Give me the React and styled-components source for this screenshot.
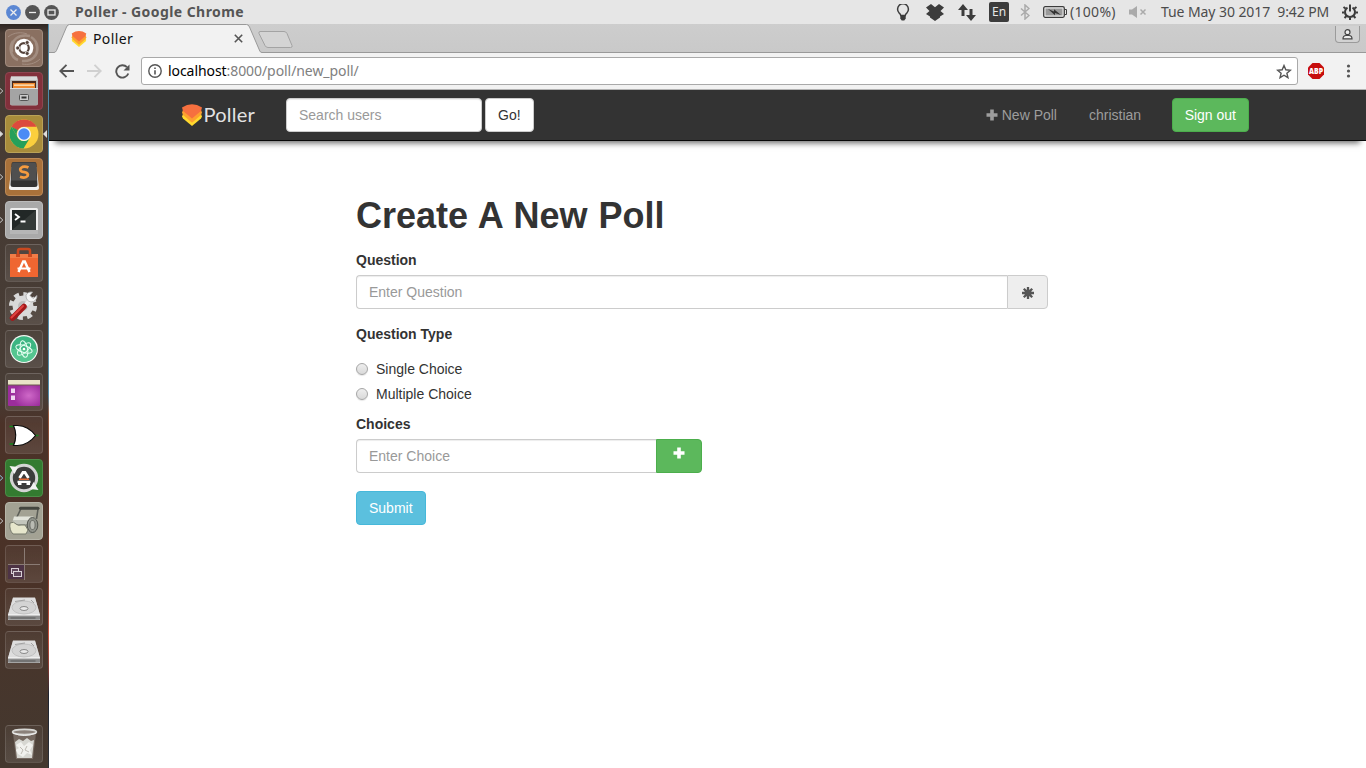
import React from "react";
import styled, { createGlobalStyle, css } from "styled-components";

const GlobalStyle = createGlobalStyle`
  * { box-sizing: border-box; }
  html, body { margin: 0; height: 768px; overflow: hidden; background: #fff; }
  body { font: 14px/20px "Liberation Sans", Arial, sans-serif; color: #333; }
  svg { display: block; flex: none; }
`;

const ubuntu = css`font-family: "Noto Sans", "Open Sans", sans-serif; white-space: nowrap;`;

/* ---------- desktop shell ---------- */
const Desktop = styled.div`
  width: 1366px; height: 768px; display: flex; flex-direction: column; overflow: hidden;
`;
const Panel = styled.header`
  ${ubuntu}
  height: 24px; flex: none; display: flex; align-items: center;
  background: #e6e6e6; color: #4c4c4c; font-size: 14px; line-height: 24px;
`;
const WindowButtons = styled.div`display: flex; gap: 4px; margin-left: 6px;`;
const WindowTitle = styled.div`
  width: 200px; margin-left: 16px; font-weight: 700; font-size: 14px; letter-spacing: ${(p) => p.$ls || 0}px; color: #555;
`;
const Indicators = styled.div`display: flex; align-items: center; margin-left: auto; height: 24px;`;
const Indicator = styled.div`
  width: ${(p) => p.$w}px; margin-right: ${(p) => p.$gap || 0}px; height: 24px; display: flex; align-items: center; justify-content: center;
`;
const IndicatorText = styled.div`
  width: ${(p) => p.$w}px; margin-right: ${(p) => p.$gap || 0}px; font-size: 14px; letter-spacing: ${(p) => p.$ls || 0}px; white-space: pre;
`;
const Keyboard = styled.div`
  width: 20px; height: 20px; margin-right: 11px; border-radius: 2px; background: #3c3c3c; color: #e6e6e6;
  font-size: 12px; line-height: 20px; text-align: center;
`;
const Workspace = styled.div`display: flex; flex: 1; min-height: 0;`;

/* ---------- launcher ---------- */
const Launcher = styled.nav`
  width: 49px; flex: none; display: flex; flex-direction: column; gap: 5px; padding: 5px 0 5px 0;
  border-right: 1px solid; border-image: linear-gradient(#4f8cab 0, #4f8cab 370px, #9a5a3e 390px, #5a3028 470px, #8a4030 560px, #c9503c 610px, #8f3d33 640px, #1f2430 670px, #2c3038 744px) 1;
  background: linear-gradient(#2e2622 0, #473b34 9px, #473c35 370px, #4b3228 400px, #4a3227 560px, #48352b 610px, #44382f 744px);
`;
const LauncherItem = styled.div`
  height: 38px; display: flex; align-items: center; flex: none; margin-top: ${(p) => (p.$last ? "auto" : 0)};
`;
const Pip = styled.div`width: 5px; height: 10px; display: flex; align-items: center;`;
const Tile = styled.div`
  width: 38px; height: 38px; border-radius: 4px; overflow: hidden; border: 1px solid ${(p) => p.$edge || "rgba(255,255,255,.12)"};
  background: ${(p) => p.$bg || "linear-gradient(rgba(255,255,255,.04), rgba(255,255,255,.1))"};
  svg { margin: -1px; }
`;

/* ---------- browser ---------- */
const Browser = styled.div`flex: 1; min-width: 0; display: flex; flex-direction: column; background: #fff;`;
const TabStrip = styled.div`
  height: 29px; flex: none; display: flex; background: linear-gradient(#cdcdcd, #c9c9c9); box-shadow: inset 0 -1px #999;
`;
const TabShape = styled.div`position: relative; width: 206px; height: 29px; margin-left: 5px;`;
const TabOutline = styled.svg`position: absolute; left: 0; top: 0;`;
const TabContent = styled.div`
  ${ubuntu}
  position: relative; display: flex; align-items: center; height: 29px; padding: 0 17px 0 17px; color: #111; font-size: 14px;
`;
const TabTitle = styled.span`margin-left: 6px; flex: 1; letter-spacing: ${(p) => p.$ls || 0}px;`;
const NewTab = styled.div`margin: 7px 0 0 -3px;`;
const UserButton = styled.div`
  margin: 2px 6px 0 auto; width: 25px; height: 17px; border: 1px solid #9b9b9b; border-top: 0; border-radius: 0 0 4px 4px;
  display: flex; justify-content: center; padding-top: 3px; background: #d2d2d2;
`;
const Toolbar = styled.div`
  height: 37px; flex: none; display: flex; align-items: center; background: #f2f2f2; border-bottom: 1px solid #b3b3b3;
  padding: 0 0 0 9px;
`;
const Omnibox = styled.div`
  ${ubuntu}
  flex: none; width: 1157px; height: 28px; margin: 0 9px 0 11px; padding: 0 5px 0 6px; display: flex; align-items: center;
  background: #fff; border: 1px solid #a9a9a9; border-radius: 3px; font-size: 14px; color: #808080;
`;
const Url = styled.div`margin-left: 6px; flex: 1; letter-spacing: ${(p) => p.$ls || 0}px; b { font-weight: 400; color: #000; }`;
const ToolIcon = styled.div`flex: none; width: ${(p) => p.$w}px; display: flex; justify-content: center;`;

/* ---------- page ---------- */
const Page = styled.main`flex: 1;`;
const Navbar = styled.div`
  height: 51px; background: #333; border-bottom: 1px solid #080808; box-shadow: 0 8px 6px -6px rgba(0,0,0,.6);
  display: flex; align-items: center; padding: 0 117px 1px 133px;
`;
const Brand = styled.div`display: flex; align-items: center; width: 104px;`;
const BrandName = styled.span`
  margin: -2px 0 0 1.5px; font: 400 20px/24px Lato, sans-serif; letter-spacing: ${(p) => p.$ls || 0}px; color: #e2e2e2;
`;
const Input = styled.input`
  height: 34px; width: ${(p) => p.$w}px; padding: 6px 12px; font: 14px/20px "Liberation Sans", Arial, sans-serif; color: #555;
  background: #fff; border: 1px solid #ccc; border-radius: ${(p) => (p.$joined ? "4px 0 0 4px" : "4px")};
  box-shadow: inset 0 1px 1px rgba(0,0,0,.075); outline: 0; ${(p) => p.$joined && "border-right: 0;"}
  &::placeholder { color: #999; opacity: 1; }
`;
const tones = {
  plain: ["#fff", "#ccc", "#333"],
  success: ["#5cb85c", "#4cae4c", "#fff"],
  info: ["#5bc0de", "#46b8da", "#fff"],
};
const Button = styled.button`
  height: 34px; padding: 6px 12px; font: 14px/20px "Liberation Sans", Arial, sans-serif; white-space: nowrap;
  background: ${(p) => tones[p.$tone][0]}; border: 1px solid ${(p) => tones[p.$tone][1]}; color: ${(p) => tones[p.$tone][2]};
  border-radius: ${(p) => (p.$joined ? "0 4px 4px 0" : "4px")};
`;
const SearchForm = styled.div`display: flex; gap: 3px;`;
const NavLinks = styled.div`display: flex; align-items: center; margin-left: auto; color: #9d9d9d;`;
const NavLink = styled.a`display: flex; align-items: center; gap: 3.5px; margin-right: ${(p) => p.$gap}px;`;
const Form = styled.form`width: 692px; margin: 55px 0 0 307px;`;
const Heading = styled.h1`margin: 0 0 14px; font-size: 36px; line-height: 40px; font-weight: 700; height: 40px; word-spacing: 1px;`;
const Label = styled.label`display: block; height: 20px; margin-bottom: ${(p) => p.$gap ?? 5}px; font-weight: 700;`;
const InputGroup = styled.div`display: flex; height: 34px; margin-bottom: ${(p) => p.$gap}px;`;
const Addon = styled.div`
  width: 41px; height: 34px; border: 1px solid #ccc; border-radius: 0 4px 4px 0; background: #eee;
  display: flex; align-items: center; justify-content: center; padding-top: 2px;
`;
const AddButton = styled(Button)`width: 46px; display: flex; justify-content: center; padding: 7px 0 0;`;
const RadioRow = styled.label`display: flex; align-items: center; gap: 8px; height: 20px; margin-bottom: ${(p) => p.$gap}px;`;
const Radio = styled.input`
  appearance: none; width: 12px; height: 12px; margin: 0; border: 1px solid #a6a6a6; border-radius: 50%;
  background: linear-gradient(#eee, #d9d9d9); box-shadow: 0 1px 1px rgba(0,0,0,.1);
`;

/* ---------- drawings ---------- */
const PollerMark = ({ w, h }) => (
  <svg width={w} height={h} viewBox="0 0 20 22">
    <path d="M0 12.500L1 10h18l1 2.500-1 2L10 22 1 14.500z" fill="#ffd92e" />
    <path d="M0 8.500L1 6h18l1 2.500-1 2.500-9 7.800L1 11z" fill="#fda12f" />
    <path d="M0 3.500Q10-3.200 20 3.500L19 7l-9 7.500L1 7z" fill="#f6703f" />
  </svg>
);
const Plus = ({ size, color }) => (
  <svg width={size} height={size} viewBox="0 0 12 12"><path d="M4.200 .5h3.600v3.700h3.700v3.600H7.800v3.700H4.200V7.800H.5V4.200h3.700z" fill={color} /></svg>
);
const WinButton = ({ fill, children }) => (
  <svg width="15" height="15" viewBox="0 0 15 15">
    <circle cx="7.500" cy="7.500" r="7.400" fill={fill} />
    <g stroke="#eee" strokeWidth="1.300" fill="none">{children}</g>
  </svg>
);
const Art = ({ children }) => <svg width="38" height="38" viewBox="0 0 38 38">{children}</svg>;

const UbuntuArt = () => (
  <Art>
    <g fill="none" stroke="#c9bbb2" strokeWidth="2.500" opacity=".4">
      <path d="M7 23C5 10 14 5 25 7M31 14c4 11-3 19-14 18M13 31C5 28 4 18 8 12M26 8c8 5 8 15 3 20" />
      <path d="M3 8c6-5 14-5 19-3M35 30c-5 5-12 6-18 5" strokeWidth="1" />
    </g>
    <circle cx="19" cy="19" r="9.300" fill="#fff" />
    <circle cx="19" cy="19" r="4.800" fill="none" stroke="#54423a" strokeWidth="2.200" />
    <g fill="#54423a" stroke="#fff" strokeWidth=".7"><circle cx="12.700" cy="19" r="2" /><circle cx="22.200" cy="13.500" r="2" /><circle cx="22.200" cy="24.500" r="2" /></g>
  </Art>
);
const FilesArt = () => (
  <Art>
    <path d="M6 4.500h26l1 3v24q0 2-2 2H7q-2 0-2-2v-24z" fill="#b8b8b8" /><path d="M6 4.500h26v3.500H6z" fill="#d8d8d8" />
    <path d="M7 9h24v7H7z" fill="#4a2a1c" /><path d="M8 11h22v5H8z" fill="#f08a30" /><path d="M9 12.500h20v1.200H9z" fill="#fff0d0" />
    <path d="M5 16h28v15q0 2-2 2H7q-2 0-2-2z" fill="#a4a4a4" /><path d="M5 16h28v1H5z" fill="#ddd" />
    <rect x="14.500" y="22.500" width="9" height="6" rx="1" fill="#ccc" stroke="#555" /><path d="M16.500 25.500h5" stroke="#333" strokeWidth="2" />
  </Art>
);
const ChromeArt = () => (
  <Art>
    <circle cx="19" cy="19" r="14.500" fill="#fbcf3d" />
    <path d="M6.400 11.800A14.500 14.500 0 0 1 31.600 11.800H19a7.200 7.200 0 0 0-6.200 3.600z" fill="#dc4a3d" />
    <path d="M6.400 11.800A14.500 14.500 0 0 0 18.500 33.500l6.700-11A7.200 7.200 0 0 1 12.800 22.600z" fill="#26a05a" />
    <path d="M6.400 11.800l6.400 10.800A7.200 7.200 0 0 1 12.800 15z" fill="#26a05a" />
    <circle cx="19" cy="19" r="7" fill="#f5f5f5" /><circle cx="19" cy="19" r="5.700" fill="#4b8bf5" />
  </Art>
);
const SublimeArt = () => (
  <Art>
    <path d="M6.500 9h25l2.500 21q0 2-2 2H6q-2 0-2-2z" fill="#f3f3f3" />
    <path d="M8.500 4h21q2 0 2 2l1 20.500q0 2.500-2.500 2.500H8q-2.500 0-2.500-2.500L6.500 6q0-2 2-2z" fill="#333" />
    <path d="M8.500 4.500h21q1.500 0 1.500 2l.8 16H6.200L7 6.500q0-2 1.500-2z" fill="#4f4f4f" />
    <path d="M23.500 9.500q-3-1.500-6-.6-3.500 1.600-1.600 4 1 1 3.600 1.300 4.500.8 3 3.800-2 2.700-7.500.8" fill="none" stroke="#f49b3f" strokeWidth="2.800" />
  </Art>
);
const TerminalArt = () => (
  <Art>
    <rect x="5" y="7" width="28" height="26" rx="1.500" fill="#eee" /><rect x="5" y="29" width="28" height="4" fill="#b6b6b6" />
    <rect x="7" y="9" width="24" height="20" fill="#222827" /><path d="M7 29L31 9v20z" fill="#343a38" />
    <path d="M10 13l4 3-4 3M15.500 20.500h5" fill="none" stroke="#fff" strokeWidth="1.800" />
  </Art>
);
const SoftwareArt = () => (
  <Art>
    <path d="M13 10V7q0-2 2-2h8q2 0 2 2v3" fill="none" stroke="#c94920" strokeWidth="2.500" />
    <path d="M5 10h28v23H5z" fill="#ef6631" /><path d="M5 10h28v4H5z" fill="#f27c47" /><path d="M11 10h4v3h-4zM23 10h4v3h-4z" fill="#c94920" />
    <path d="M13.500 28L18.200 17.500h1.600L24.500 28" fill="none" stroke="#fff" strokeWidth="2.500" /><path d="M12.500 24.500h13" stroke="#fff" strokeWidth="2" />
  </Art>
);
const SettingsArt = () => (
  <Art>
    <circle cx="18" cy="19" r="11.800" fill="none" stroke="#d7d7d7" strokeWidth="4.500" strokeDasharray="5 4.270" />
    <circle cx="18" cy="19" r="10.500" fill="#d9d9d9" /><circle cx="18" cy="19" r="5" fill="#bdbdbd" />
    <path d="M17 22L26 12.500" stroke="#ececec" strokeWidth="4" /><path d="M32 8.500l-4 3-3-3 2.500-3.500q-5-.5-6.500 3.500 0 5.500 5 6.500 6-.5 6-6.500z" fill="#f4f4f4" stroke="#aaa" strokeWidth=".8" />
    <path d="M7.500 31L19 19.500" stroke="#a4181a" strokeWidth="5.500" strokeLinecap="round" /><path d="M6.500 30.500L18 19" stroke="#df4240" strokeWidth="2" strokeLinecap="round" />
  </Art>
);
const AtomArt = () => (
  <Art>
    <circle cx="19" cy="19" r="14" fill="#f4f8f4" /><circle cx="19" cy="19" r="12.700" fill="#3cb582" /><path d="M6.300 19a12.700 12.700 0 0 0 25.400 0z" fill="#55c690" />
    <g fill="none" stroke="#e6fff2" strokeWidth="1"><ellipse cx="19" cy="19" rx="8.500" ry="3.500" transform="rotate(18 19 19)" /><ellipse cx="19" cy="19" rx="8.500" ry="3.500" transform="rotate(78 19 19)" /><ellipse cx="19" cy="19" rx="8.500" ry="3.500" transform="rotate(138 19 19)" /></g>
    <circle cx="19" cy="19" r="1.300" fill="#fff" />
  </Art>
);
const WindowArt = () => (
  <Art>
    <defs><radialGradient id="purple" cx=".65" cy=".6"><stop offset="0" stopColor="#cf69c8" /><stop offset="1" stopColor="#9b2d9c" /></radialGradient></defs>
    <rect x="3" y="7" width="32" height="26" rx="1" fill="url(#purple)" /><rect x="3" y="7" width="32" height="5" fill="#e9e4c7" /><path d="M3 12h32" stroke="#6d5b4c" />
    <path d="M6 15.500h4v4.500H6zM6 22.500h4V27H6z" fill="#f0d5f1" />
  </Art>
);
const GateArt = () => (
  <Art>
    <path d="M4.500 10.500h6M4.500 28h6M30 19.500h3.500" stroke="#11841b" strokeWidth="1.500" />
    <path d="M8.500 9.500h4q11 .5 18 10-7 9.500-18 10h-4q4.500-10 0-20z" fill="#fff" stroke="#0b0b0b" strokeWidth="1.200" />
  </Art>
);
const UpdaterArt = () => (
  <Art>
    <circle cx="19" cy="19" r="12.700" fill="#3c3c3c" stroke="#d4d4d4" strokeWidth="3" />
    <path d="M4.500 7l8.500 1-3.500 7zM33.500 31L25 30l3.500-7z" fill="#f2f2f2" />
    <path d="M14.500 19l3.500-5.500h2l3.500 5.500" fill="none" stroke="#fff" strokeWidth="2.800" />
    <path d="M14 20.300h10" stroke="#e36a36" strokeWidth="1.600" /><path d="M12.500 22.800h13" stroke="#fff" strokeWidth="2.200" /><path d="M13 25h3.500M21.500 25H25" stroke="#fff" strokeWidth="2.200" />
  </Art>
);
const RollerArt = () => (
  <Art>
    <path d="M11 17l5-10.500M31.500 17L33 7" fill="none" stroke="#5c5e58" strokeWidth="1.600" /><path d="M15.500 6.200h17.500" stroke="#44463f" strokeWidth="3" strokeLinecap="round" />
    <path d="M9 15h18q7 2 6 9-1 7-6 8H10z" fill="#9a9d94" /><path d="M9 14.500h19q2.500 1 3.500 3.500H8z" fill="#e2e4db" /><path d="M8 18h22v4H7z" fill="#c3c6bc" />
    <ellipse cx="27.500" cy="23" rx="5.300" ry="7.500" fill="#8f928a" stroke="#52544d" /><ellipse cx="27.500" cy="23" rx="2.600" ry="4.500" fill="#b9bbb3" stroke="#5e6059" strokeWidth=".8" />
    <path d="M5 21q4-2 6 1 2 2 5 1h4l3 5-2 4H8q-4-4-3-11z" fill="#e6e6cc" stroke="#777a6d" />
  </Art>
);
const WorkspaceArt = () => (
  <Art>
    <rect x="3" y="20" width="16" height="14" fill="#4d3345" /><path d="M19.500 3v32M3 19.500h32" stroke="#8a7b74" strokeWidth="1" />
    <g fill="#5e465a" stroke="#d8d0d6"><rect x="6.500" y="23.500" width="7" height="5" /><rect x="8.500" y="26.500" width="8" height="5" /></g>
  </Art>
);
const DiskArt = () => (
  <Art>
    <path d="M8 10h22l5 17v5H3v-5z" fill="#bdbdbd" /><path d="M8 9.500h22L35 27H3z" fill="#dedede" />
    <path d="M3 27h32v3.500q0 1-1 1H4q-1 0-1-1z" fill="#8c8c8c" /><path d="M3 27h32" stroke="#fff" />
    <path d="M5.500 30h25" stroke="#5a5a5a" />
    <ellipse cx="19" cy="19.500" rx="12" ry="6.500" fill="#d4d4d4" stroke="#c0c0c0" /><ellipse cx="19" cy="20.500" rx="4" ry="2" fill="#e9e9e9" stroke="#8a8a8a" /><path d="M10 13.500l10-1.500M26 12l3 3" stroke="#a2a2a2" />
  </Art>
);
const TrashArt = () => (
  <Art>
    <path d="M8 8h23l-3 26H11z" fill="#81766e" opacity=".75" />
    <path d="M10 17l4-3 4 2 4-3 4 3 3-1-2 18H12z" fill="#d7d7d2" /><path d="M11 20l5-3 3 4 5-4 4 3-3 5 2 5-5-2-4 4-5-3-2-4 3-2z" fill="#f1f1ee" />
    <path d="M15 22l3 3-2 4M22 21l-2 4 4 2" fill="none" stroke="#bdbab3" />
    <ellipse cx="19.500" cy="7" rx="12" ry="2.600" fill="#8b817a" stroke="#d8d8d5" strokeWidth="1.600" /><path d="M8 8q11 5 23 0" fill="none" stroke="#eee" />
  </Art>
);

const apps = [
  [UbuntuArt, "#8a7162", "#a18b7e"],
  [FilesArt, "#82303b", "#8e4550", "open"],
  [ChromeArt, "#a88c3b", "#baa257", "active"],
  [SublimeArt, "#a9713a", "#bb8856", "open"],
  [TerminalArt, "#a9a9a9", "#bbb", "open"],
  [SoftwareArt], [SettingsArt], [AtomArt], [WindowArt], [GateArt],
  [UpdaterArt, "#337b30", "#4b8d48", "notify"],
  [RollerArt, "#a3a294", "#b6b5a9", "open"],
  [WorkspaceArt], [DiskArt], [DiskArt], [TrashArt],
];

const Marker = ({ state, flip }) => (
  <svg width="5" height="8" viewBox="0 0 5 8">
    {flip ? <path d="M4 0v8L0 4z" fill="#ddd" /> : <path d="M-1 .5L2.800 4-1 7.500" fill={state === "active" ? "#ddd" : "none"} stroke={state === "notify" ? "#8fc7df" : "#ccc"} />}
  </svg>
);

export default function App() {
  return (
    <Desktop>
      <GlobalStyle />
      <Panel>
        <WindowButtons>
          <WinButton fill="#5b87d3"><path d="M4.500 4.500l6 6M10.500 4.500l-6 6" /></WinButton>
          <WinButton fill="#555"><path d="M4 7.500h7" /></WinButton>
          <WinButton fill="#555"><rect x="4" y="5" width="7" height="5" /></WinButton>
        </WindowButtons>
        <WindowTitle $ls={0.43}>Poller - Google Chrome</WindowTitle>
        <Indicators>
          <Indicator $w={14} $gap={16}>
            <svg width="14" height="17" viewBox="0 0 14 17"><path d="M4.800 11.500Q4.500 10 3 8.800a5.400 5.400 0 1 1 8 0q-1.500 1.200-1.800 2.700z" fill="none" stroke="#3c3c3c" strokeWidth="1.500" /><path d="M4.300 11.500h5.400v3L8.300 16.500H5.700l-1.400-2z" fill="#3c3c3c" /></svg>
          </Indicator>
          <Indicator $w={18} $gap={14}>
            <svg width="18" height="17" viewBox="0 0 18 17"><path d="M5 0l4 3.200L13 0l5 3.500L14.500 7 18 10l-4 2.500v1L9 17l-5-3.500v-1L0 10l3.500-3L0 3.500z" fill="#3c3c3c" /></svg>
          </Indicator>
          <Indicator $w={18} $gap={13}>
            <svg width="18" height="17" viewBox="0 0 18 17"><path d="M5 0l5 6H6.500v6h-3V6H0zM13 17l-5-6h3.500V5h3v6H18z" fill="#3c3c3c" /></svg>
          </Indicator>
          <Keyboard>En</Keyboard>
          <Indicator $w={10} $gap={13}>
            <svg width="10" height="16" viewBox="0 0 10 16"><path d="M1 4.500l8 7-4 3.500V1l4 3.500-8 7" fill="none" stroke="#aaa" strokeWidth="1.500" /></svg>
          </Indicator>
          <Indicator $w={24} $gap={3}>
            <svg width="24" height="12" viewBox="0 0 24 12"><rect x=".7" y=".7" width="20.600" height="10.600" rx="1.500" fill="#eee" stroke="#3c3c3c" strokeWidth="1.300" /><rect x="2.500" y="2.500" width="17" height="7" fill="#999" /><path d="M22 3.500h1.500v5H22" fill="none" stroke="#3c3c3c" /><path d="M5 3l6 2.500V3.200L18 9l-6-2v2.200z" fill="#333" /></svg>
          </Indicator>
          <IndicatorText $w={59} $ls={0.3}>(100%)</IndicatorText>
          <Indicator $w={18} $gap={14}>
            <svg width="18" height="12" viewBox="0 0 18 12"><path d="M0 3.500h3L8 0v12L3 8.500H0z" fill="#aaa" /><path d="M11.500 3.500l5 5M16.500 3.500l-5 5" stroke="#aaa" strokeWidth="1.500" /></svg>
          </Indicator>
          <IndicatorText $w={181} $ls={-0.08}>{"Tue May 30 2017  9:42 PM"}</IndicatorText>
          <Indicator $w={16} $gap={8}>
            <svg width="16" height="16" viewBox="0 0 16 16"><path d="M5.500 3.700a5 5 0 1 0 5 0" fill="none" stroke="#3c3c3c" strokeWidth="2" /><path d="M8 .5v7M1.500 3l2 1.500M14.500 3l-2 1.500M0 8.500h2.500M13.500 8.500H16M2.500 14l2-2M13.500 14l-2-2M8 13.500V16" stroke="#3c3c3c" strokeWidth="2" /></svg>
          </Indicator>
        </Indicators>
      </Panel>
      <Workspace>
        <Launcher>
          {apps.map(([Icon, bg, edge, state], i) => (
            <LauncherItem key={i} $last={i === apps.length - 1}>
              <Pip>{state && <Marker state={state} />}</Pip>
              <Tile $bg={bg} $edge={edge}><Icon /></Tile>
              <Pip>{state === "active" && <Marker flip />}</Pip>
            </LauncherItem>
          ))}
        </Launcher>
        <Browser>
          <TabStrip>
            <TabShape>
              <TabOutline width="208" height="29" viewBox="0 0 208 29">
                <path d="M0 28.500q1.500 0 2.500-2L12.500 3q1-2.500 3-2.500h177q2 0 3 2.500l10.300 24q.7 1.500 2.200 1.500V29H0z" fill="#f2f2f2" />
                <path d="M0 28.500q1.500 0 2.500-2L12.500 3q1-2.500 3-2.500h177q2 0 3 2.500l10.300 24q.7 1.500 2.200 1.500" fill="none" stroke="#999" />
              </TabOutline>
              <TabContent>
                <PollerMark w={16} h={16} />
                <TabTitle $ls={0.4}>Poller</TabTitle>
                <svg width="9" height="9" viewBox="0 0 9 9"><path d="M.8 .8l7.400 7.400M8.200 .8L.8 8.200" stroke="#555" strokeWidth="1.600" /></svg>
              </TabContent>
            </TabShape>
            <NewTab>
              <svg width="36" height="18" viewBox="0 0 36 18"><path d="M3 .5h24q2 0 3 2l5 12q.8 2-1.500 2H11q-2 0-3-2L2 2.500Q1.500 .5 3 .5z" fill="#d4d4d4" stroke="#a3a3a3" /></svg>
            </NewTab>
            <UserButton>
              <svg width="11" height="11" viewBox="0 0 11 11"><circle cx="5.500" cy="3.200" r="2.500" fill="#eee" stroke="#444" strokeWidth="1.200" /><path d="M1 9.900q0-3.400 3-3.400h3q3 0 3 3.400z" fill="#eee" stroke="#444" strokeWidth="1.200" /></svg>
            </UserButton>
          </TabStrip>
          <Toolbar>
            <ToolIcon $w={16}><svg width="15" height="14" viewBox="0 0 15 14"><path d="M7.500 .8L1.300 7l6.200 6.200M1.500 7H15" fill="none" stroke="#555" strokeWidth="1.900" /></svg></ToolIcon>
            <ToolIcon $w={40}><svg width="15" height="14" viewBox="0 0 15 14"><path d="M7.500 .8L13.700 7l-6.200 6.200M13.500 7H0" fill="none" stroke="#d0d0d0" strokeWidth="1.900" /></svg></ToolIcon>
            <ToolIcon $w={16}><svg width="15" height="15" viewBox="0 0 15 15"><path d="M13.300 9.500A6.200 6.200 0 1 1 12 3.200" fill="none" stroke="#555" strokeWidth="1.900" /><path d="M14.500 .5v6h-6z" fill="#555" /></svg></ToolIcon>
            <Omnibox>
              <svg width="14" height="14" viewBox="0 0 14 14"><circle cx="7" cy="7" r="6.200" fill="none" stroke="#555" strokeWidth="1.400" /><path d="M7 6.200v4.300M7 3.400v1.500" stroke="#555" strokeWidth="1.600" /></svg>
              <Url $ls={-0.07}><b>localhost</b>:8000/poll/new_poll/</Url>
              <svg width="16" height="15" viewBox="0 0 15 14"><path d="M7.500 1.400l1.700 4 4.300.4-3.300 2.800 1 4.200-3.700-2.300-3.700 2.300 1-4.200L1.500 5.800l4.300-.4z" fill="none" stroke="#555" strokeWidth="1.300" /></svg>
            </Omnibox>
            <svg width="18" height="16" viewBox="0 0 18 16"><path d="M5.500 0h7L17 4.500v7L12.500 16h-7L1 11.500v-7z" fill="#c70d0d" /><text x="9" y="11" textAnchor="middle" fontFamily="Open Sans, sans-serif" fontWeight="800" fontSize="8.300" textLength="14" lengthAdjust="spacingAndGlyphs" fill="#fff">ABP</text></svg>
            <ToolIcon $w={41}><svg width="10" height="14" viewBox="-5.500 0 10 14"><g fill="#555"><circle cx="2" cy="2" r="1.600" /><circle cx="2" cy="7" r="1.600" /><circle cx="2" cy="12" r="1.600" /></g></svg></ToolIcon>
          </Toolbar>
          <Page>
            <Navbar>
              <Brand><PollerMark w={20} h={22} /><BrandName $ls={0.25}>Poller</BrandName></Brand>
              <SearchForm>
                <Input $w={196} placeholder="Search users" />
                <Button $tone="plain">Go!</Button>
              </SearchForm>
              <NavLinks>
                <NavLink $gap={32}><Plus size={12} color="#9d9d9d" />New Poll</NavLink>
                <NavLink $gap={30.5}>christian</NavLink>
                <Button $tone="success">Sign out</Button>
              </NavLinks>
            </Navbar>
            <Form>
              <Heading>Create A New Poll</Heading>
              <Label>Question</Label>
              <InputGroup $gap={15}>
                <Input $w={651} $joined placeholder="Enter Question" />
                <Addon>
                  <svg width="12" height="12" viewBox="0 0 12 12"><path d="M6 0v12M0 6h12M1.800 1.800l8.400 8.400M10.200 1.800l-8.400 8.400" stroke="#555" strokeWidth="2.300" /><circle cx="6" cy="6" r="3.500" fill="#555" /></svg>
                </Addon>
              </InputGroup>
              <Label $gap={15}>Question Type</Label>
              <RadioRow $gap={5}><Radio type="radio" name="kind" />Single Choice</RadioRow>
              <RadioRow $gap={10}><Radio type="radio" name="kind" />Multiple Choice</RadioRow>
              <Label>Choices</Label>
              <InputGroup $gap={18}>
                <Input $w={300} $joined placeholder="Enter Choice" />
                <AddButton type="button" $tone="success" $joined><Plus size={12} color="#fff" /></AddButton>
              </InputGroup>
              <Button type="button" $tone="info">Submit</Button>
            </Form>
          </Page>
        </Browser>
      </Workspace>
    </Desktop>
  );
}
